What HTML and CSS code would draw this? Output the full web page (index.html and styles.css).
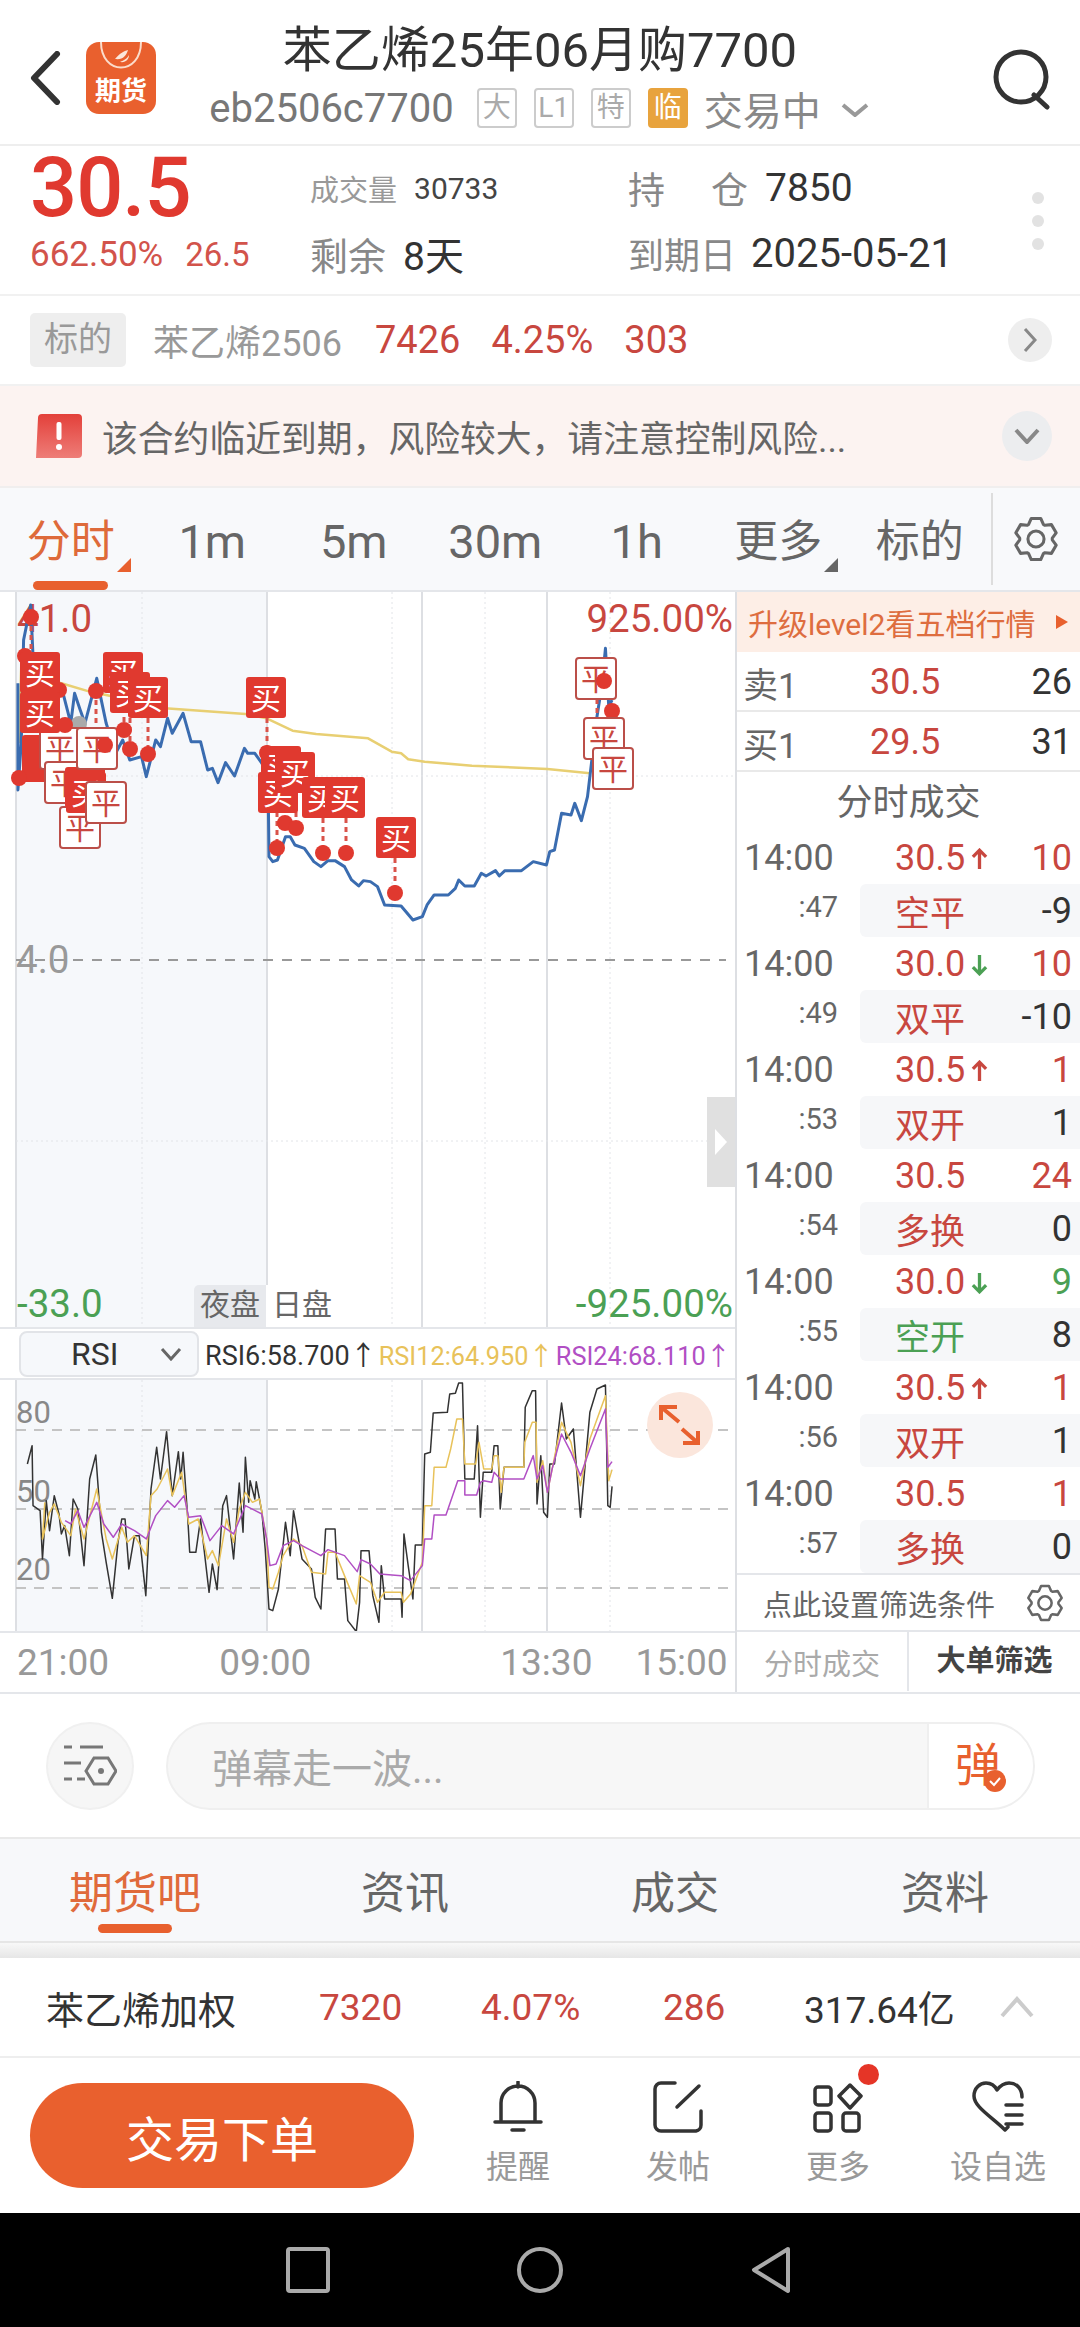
FILE: index.html
```html
<!DOCTYPE html>
<html lang="zh-CN">
<head>
    <meta charset="UTF-8">
    <meta name="viewport" content="width=device-width, initial-scale=1.0">
    <title>苯乙烯25年06月购7700</title>
    <link rel="stylesheet" href="styles.css">
</head>
<body>
<svg class="defs" width="0" height="0">
    <symbol id="gear" viewBox="0 0 24 24">
        <polygon points="9.53,1.28 14.47,1.28 15.86,4.43 16.63,4.87 20.04,4.5 22.52,8.79 20.49,11.55 20.49,12.45 22.52,15.21 20.04,19.5 16.63,19.13 15.86,19.57 14.47,22.72 9.53,22.72 8.14,19.57 7.37,19.13 3.96,19.5 1.48,15.21 3.51,12.45 3.51,11.55 1.48,8.79 3.96,4.5 7.37,4.87 8.14,4.43"/>
        <circle cx="12" cy="12" r="4.2"/>
    </symbol>
    <symbol id="up" viewBox="0 0 16 20">
        <path d="M8 19V2M2 8l6-6 6 6"/>
    </symbol>
    <symbol id="down" viewBox="0 0 16 20">
        <path d="M8 1v17M2 12l6 6 6-6"/>
    </symbol>
</svg>

<header class="top">
    <div class="top-left">
        <svg class="back" width="32" height="54" viewBox="0 0 32 54"><path d="M28 3L5 27l23 24"/></svg>
        <svg class="logo" width="70" height="72" viewBox="0 0 70 72">
            <rect width="70" height="72" y="0" rx="13" fill="#e9602e"/>
            <path d="M15 0c0 34 40 34 40 0" fill="none" stroke="#fbdccb" stroke-width="2"/>
            <path d="M29 17c5-6 9-8 13-9-2 6-5 10-13 9zM34 20c4-2 7-3 9-7 0 4-3 8-9 7z" fill="#fbe6da"/>
            <text x="35" y="58" class="logo-text">期货</text>
        </svg>
    </div>
    <div class="top-mid">
        <h1>苯乙烯25年06月购7700</h1>
        <div class="sub">
            <span class="code">eb2506c7700</span>
            <span class="flag">大</span>
            <span class="flag">L1</span>
            <span class="flag">特</span>
            <span class="flag flag-on">临</span>
            <span class="state">交易中</span>
            <svg class="state-arrow" width="28" height="14" viewBox="0 0 28 14"><path d="M2 2l12 10L26 2"/></svg>
        </div>
    </div>
    <div class="top-right">
        <svg class="search" width="62" height="62" viewBox="0 0 62 62"><circle cx="31" cy="29" r="25"/><path d="M44 47l13 12"/></svg>
    </div>
</header>

<section class="quote">
    <div class="q-left">
        <div class="q-price">30.5</div>
        <div class="q-change"><span>662.50%</span><span>26.5</span></div>
    </div>
    <div class="q-grid">
        <div class="q-cell"><span class="k-small">成交量</span><span class="v-small">30733</span></div>
        <div class="q-cell"><span class="k k-spread"><span>持</span><span>仓</span></span><span class="v">7850</span></div>
        <div class="q-cell"><span class="k">剩余</span><span class="v">8天</span></div>
        <div class="q-cell"><span class="k k-date">到期日</span><span class="v v-date">2025-05-21</span></div>
    </div>
    <div class="q-dots"><i></i><i></i><i></i></div>
</section>

<section class="under">
    <span class="under-tag">标的</span>
    <span class="under-name">苯乙烯2506</span>
    <span class="red">7426</span>
    <span class="red">4.25%</span>
    <span class="red">303</span>
    <span class="round-btn under-btn"><svg width="14" height="26" viewBox="0 0 14 26"><path d="M2 2l10 11L2 24"/></svg></span>
</section>

<section class="alert">
    <svg class="alert-icon" width="46" height="44" viewBox="0 0 46 44">
        <defs><linearGradient id="alertfill" x1="0" y1="0" x2="0" y2="1"><stop offset="0" stop-color="#e3403a"/><stop offset="1" stop-color="#ee7d78"/></linearGradient></defs>
        <path d="M6 0h36a4 4 0 0 1 4 4v36a4 4 0 0 1-4 4H0L2 4a4 4 0 0 1 4-4z" fill="url(#alertfill)"/>
        <rect x="20.5" y="8" width="5" height="18" rx="2" fill="#fff"/>
        <circle cx="23" cy="33" r="3" fill="#fff"/>
    </svg>
    <span class="alert-text">该合约临近到期，风险较大，请注意控制风险...</span>
    <span class="round-btn alert-btn"><svg width="26" height="16" viewBox="0 0 26 16"><path d="M2 2l11 12L24 2"/></svg></span>
</section>

<nav class="periods">
    <span class="period period-on">分时<i class="corner"></i><b class="period-bar"></b></span>
    <span class="period period-num">1m</span>
    <span class="period period-num">5m</span>
    <span class="period period-num">30m</span>
    <span class="period period-num">1h</span>
    <span class="period">更多<i class="corner"></i></span>
    <span class="period">标的</span>
    <span class="period-gear"><svg width="46" height="50"><use href="#gear"/></svg></span>
</nav>

<section class="board">
    <div class="charts">
        <div class="main-chart">
            <svg class="canvas" width="735" height="735" viewBox="0 592 735 735">
                <rect x="16" y="592" width="251" height="735" fill="#f6f8fb"/>
                <g class="grid-line">
                    <path d="M16 592V1327M267 592V1327M422 592V1327M547 592V1327"/>
                </g>
                <g class="grid-dot">
                    <path d="M142 592V1327M392 592V1327M485 592V1327M610 592V1327M16 776H735M16 1141H735"/>
                </g>
                <path class="zero-line" d="M16 960H726"/>

                <text x="17" y="632" class="lbl lbl-red">41.0</text>
                <text x="733" y="632" class="lbl lbl-red lbl-end">925.00%</text>
                <text x="16" y="973" class="lbl lbl-gray">4.0</text>
                <text x="17" y="1317" class="lbl lbl-green">-33.0</text>
                <text x="733" y="1317" class="lbl lbl-green lbl-end">-925.00%</text>

                <g transform="translate(0 590) scale(.4719 .3333)">
                    <polyline class="trace avg" points="40,460 45,230 130,280 190,305 225,315 350,355 520,372 565,385 620,422 670,432 780,445 830,485 850,490 865,508 900,515 1000,527 1160,537 1250,550"/>
                    <polyline class="trace price" points="38,280 38,600 45,460 50,150 65,45 70,200 72,300 90,330 110,300 130,290 150,400 158,310 170,360 180,400 205,265 225,400 245,490 260,450 275,510 300,500 310,560 330,450 340,470 355,385 365,430 388,370 405,455 425,455 440,540 450,535 462,578 478,518 497,558 518,475 525,490 540,490 555,520 568,560 570,800 578,815 588,810 605,740 615,740 625,765 645,775 665,815 680,830 695,812 710,812 730,830 745,870 760,888 770,872 785,875 800,890 815,945 850,948 875,990 895,980 905,945 920,915 950,915 965,895 972,870 985,888 1005,888 1020,850 1030,858 1050,842 1058,858 1070,842 1105,842 1130,815 1158,825 1165,785 1175,780 1190,670 1210,675 1218,640 1232,692 1245,620 1255,500 1265,380 1275,290 1283,175 1290,350 1297,330"/>
                </g>

                <path class="link" d="M31 617V652M96 691V728M124 690V730M130 700V749M148 718V754M267 718V753M277 812V848M296 812V828M323 818V853M346 818V853M395 858V893M597 699V718M612 711V730"/>

                <circle class="dot" cx="25" cy="656" r="8"/>
                <circle class="dot" cx="59" cy="690" r="8"/>
                <circle class="dot dot-gray" cx="79" cy="724" r="8"/>
                <circle class="dot" cx="267" cy="753" r="8"/>
                <rect class="block" x="22" y="735" width="40" height="47" rx="3"/>

                <g class="sell" transform="translate(40 728)"><rect width="40" height="41" rx="3"/><text x="20" y="32">平</text></g>
                <g class="buy" transform="translate(20 652)"><rect width="40" height="41" rx="3"/><text x="20" y="32">买</text></g>
                <g class="buy" transform="translate(20 692)"><rect width="40" height="41" rx="3"/><text x="20" y="32">买</text></g>
                <g class="buy" transform="translate(103 652)"><rect width="40" height="41" rx="3"/><text x="20" y="32">买</text></g>
                <g class="buy" transform="translate(110 672)"><rect width="40" height="41" rx="3"/><text x="20" y="32">买</text></g>
                <g class="buy" transform="translate(128 677)"><rect width="40" height="41" rx="3"/><text x="20" y="32">买</text></g>
                <g class="sell" transform="translate(45 762)"><rect width="40" height="41" rx="3"/><text x="20" y="32">平</text></g>
                <g class="sell" transform="translate(60 807)"><rect width="40" height="41" rx="3"/><text x="20" y="32">平</text></g>
                <g class="buy" transform="translate(65 767)"><rect width="40" height="41" rx="3"/><text x="20" y="32">买</text></g>
                <g class="buy" transform="translate(66 772)"><rect width="40" height="41" rx="3"/><text x="20" y="32">买</text></g>
                <g class="sell" transform="translate(77 728)"><rect width="40" height="41" rx="3"/><text x="20" y="32">平</text></g>
                <g class="sell" transform="translate(86 782)"><rect width="40" height="41" rx="3"/><text x="20" y="32">平</text></g>

                <g class="buy" transform="translate(246 677)"><rect width="40" height="41" rx="3"/><text x="20" y="32">买</text></g>
                <g class="buy" transform="translate(261 746)"><rect width="40" height="41" rx="3"/><text x="20" y="32">买</text></g>
                <g class="buy" transform="translate(258 772)"><rect width="40" height="41" rx="3"/><text x="20" y="32">买</text></g>
                <g class="buy" transform="translate(275 752)"><rect width="40" height="41" rx="3"/><text x="20" y="32">买</text></g>
                <g class="buy" transform="translate(302 777)"><rect width="40" height="41" rx="3"/><text x="20" y="32">买</text></g>
                <g class="buy" transform="translate(325 777)"><rect width="40" height="41" rx="3"/><text x="20" y="32">买</text></g>
                <g class="buy" transform="translate(376 817)"><rect width="40" height="41" rx="3"/><text x="20" y="32">买</text></g>

                <g class="sell" transform="translate(576 658)"><rect width="40" height="41" rx="3"/><text x="20" y="32">平</text></g>
                <circle class="dot" cx="612" cy="711" r="8"/>
                <g class="sell" transform="translate(584 718)"><rect width="40" height="41" rx="3"/><text x="20" y="32">平</text></g>
                <g class="sell" transform="translate(593 748)"><rect width="40" height="41" rx="3"/><text x="20" y="32">平</text></g>

                <circle class="dot" cx="31" cy="617" r="8"/>
                <circle class="dot" cx="19" cy="778" r="8"/>
                <circle class="dot" cx="65" cy="725" r="8"/>
                <circle class="dot" cx="96" cy="691" r="8"/>
                <circle class="dot" cx="105" cy="745" r="8"/>
                <circle class="dot" cx="124" cy="730" r="8"/>
                <circle class="dot" cx="130" cy="749" r="8"/>
                <circle class="dot" cx="148" cy="754" r="8"/>
                <circle class="dot" cx="277" cy="848" r="8"/>
                <circle class="dot" cx="285" cy="823" r="8"/>
                <circle class="dot" cx="296" cy="828" r="8"/>
                <circle class="dot" cx="323" cy="853" r="8"/>
                <circle class="dot" cx="346" cy="853" r="8"/>
                <circle class="dot" cx="395" cy="893" r="8"/>
                <circle class="dot" cx="604" cy="681" r="8"/>
            </svg>
            <div class="session"><span class="session-on">夜盘</span><span>日盘</span></div>
            <div class="handle"><i></i></div>
        </div>

        <div class="rsi-bar">
            <div class="rsi-select"><span>RSI</span><svg width="22" height="14" viewBox="0 0 22 14"><path d="M2 2l9 10 9-10"/></svg></div>
            <span class="rsi-val rsi6">RSI6:58.700↑</span>
            <span class="rsi-val rsi12">RSI12:64.950↑</span>
            <span class="rsi-val rsi24">RSI24:68.110↑</span>
        </div>

        <div class="rsi-chart">
            <svg class="canvas" width="735" height="251" viewBox="0 1381 735 251">
                <rect x="16" y="1381" width="251" height="251" fill="#f6f8fb"/>
                <g class="grid-line"><path d="M16 1381V1632M267 1381V1632M422 1381V1632M547 1381V1632"/></g>
                <g class="grid-dot"><path d="M142 1381V1632M392 1381V1632M485 1381V1632M610 1381V1632"/></g>
                <path class="rsi-dash" d="M16 1431H735M16 1510H735M16 1589H735"/>
                <text x="16" y="1424" class="rsi-lbl">80</text>
                <text x="16" y="1503" class="rsi-lbl">50</text>
                <text x="16" y="1581" class="rsi-lbl">20</text>
                <g transform="translate(0 1280) scale(.4719 .3333)">
                    <polyline class="trace r-black" points="58,555 68,500 70,680 85,695 90,840 98,665 105,755 115,650 125,705 130,765 137,740 147,830 155,660 165,690 178,860 190,600 203,528 215,760 225,850 238,958 250,790 258,720 265,720 273,870 285,770 295,770 300,830 309,950 320,630 332,505 340,600 353,458 365,650 378,518 383,600 388,520 398,720 402,820 415,820 425,720 443,940 450,855 460,932 472,680 480,650 495,840 507,612 515,760 520,535 527,670 530,605 540,660 543,608 555,700 562,810 570,990 578,995 590,930 605,730 615,830 622,695 640,840 660,870 668,955 680,990 690,750 710,750 715,900 730,900 737,1025 755,1058 762,970 765,815 782,815 790,950 803,1030 808,860 815,960 850,960 852,1015 856,765 865,860 875,960 880,798 895,798 900,525 912,520 918,402 948,400 953,345 965,343 972,312 980,312 985,600 1005,600 1012,440 1018,715 1024,580 1042,580 1047,500 1055,500 1060,690 1068,565 1110,565 1113,385 1128,335 1135,335 1138,675 1146,530 1152,700 1160,715 1165,555 1175,555 1190,372 1200,480 1215,450 1230,715 1250,400 1265,330 1283,318 1288,680 1293,685 1297,622"/>
                    <polyline class="trace r-yellow" points="95,670 90,780 105,700 115,675 130,730 150,770 160,690 178,780 205,630 225,780 238,840 258,745 270,790 285,770 310,830 320,650 333,630 355,570 365,650 385,580 400,735 420,720 440,840 450,815 463,860 480,720 495,790 507,690 520,640 535,670 550,660 565,780 570,925 578,930 590,880 600,830 622,780 640,800 660,880 690,885 695,820 710,820 730,890 755,975 762,890 785,910 800,970 815,940 850,940 855,970 870,945 895,850 900,680 915,680 920,565 945,565 955,510 968,420 980,420 985,555 1008,555 1015,490 1025,570 1042,570 1047,530 1055,530 1062,640 1068,565 1110,565 1112,490 1128,430 1136,430 1138,610 1150,545 1160,640 1170,570 1190,430 1210,490 1230,620 1250,480 1283,350 1290,605 1297,572"/>
                    <polyline class="trace r-purple" points="138,725 150,735 165,695 178,745 205,670 220,735 240,775 258,735 285,755 310,780 330,710 355,665 370,685 390,650 400,715 425,710 445,785 470,740 495,765 520,680 555,705 565,780 572,860 585,855 600,800 622,785 640,800 680,830 695,812 730,830 757,878 765,842 785,855 805,885 850,890 870,905 895,860 900,780 915,780 920,708 945,708 970,605 985,605 985,648 1010,648 1018,610 1025,605 1042,610 1047,580 1060,600 1110,600 1130,530 1138,600 1150,560 1160,640 1170,570 1190,465 1210,520 1230,590 1250,510 1283,390 1288,565 1297,548"/>
                </g>
                <ellipse cx="680" cy="1426" rx="33" ry="33" fill="#fbe6dc"/>
                <path class="expand" d="M661 1408l18 15M661 1421v-13h16M698 1444l-16-14M698 1432v12h-15"/>
            </svg>
        </div>

        <div class="axis"><span>21:00</span><span>09:00</span><span>13:30</span><span>15:00</span></div>
    </div>

    <aside class="side">
        <div class="upgrade"><span>升级level2看五档行情</span><i></i></div>
        <div class="level"><span class="level-k">卖1</span><span class="red">30.5</span><span class="level-q">26</span></div>
        <div class="level"><span class="level-k">买1</span><span class="red">29.5</span><span class="level-q">31</span></div>
        <div class="side-title">分时成交</div>
        <div class="deals">
            <div class="deal">
                <span class="t">14:00</span><span class="p">30.5<svg class="arr arr-up"><use href="#up"/></svg></span><span class="n red">10</span>
                <span class="s">:47</span><span class="kind"><b class="red">空平</b><span>-9</span></span>
            </div>
            <div class="deal">
                <span class="t">14:00</span><span class="p">30.0<svg class="arr arr-down"><use href="#down"/></svg></span><span class="n red">10</span>
                <span class="s">:49</span><span class="kind"><b class="red">双平</b><span>-10</span></span>
            </div>
            <div class="deal">
                <span class="t">14:00</span><span class="p">30.5<svg class="arr arr-up"><use href="#up"/></svg></span><span class="n red">1</span>
                <span class="s">:53</span><span class="kind"><b class="red">双开</b><span>1</span></span>
            </div>
            <div class="deal">
                <span class="t">14:00</span><span class="p">30.5</span><span class="n red">24</span>
                <span class="s">:54</span><span class="kind"><b class="red">多换</b><span>0</span></span>
            </div>
            <div class="deal">
                <span class="t">14:00</span><span class="p">30.0<svg class="arr arr-down"><use href="#down"/></svg></span><span class="n green">9</span>
                <span class="s">:55</span><span class="kind"><b class="green">空开</b><span>8</span></span>
            </div>
            <div class="deal">
                <span class="t">14:00</span><span class="p">30.5<svg class="arr arr-up"><use href="#up"/></svg></span><span class="n red">1</span>
                <span class="s">:56</span><span class="kind"><b class="red">双开</b><span>1</span></span>
            </div>
            <div class="deal">
                <span class="t">14:00</span><span class="p">30.5</span><span class="n red">1</span>
                <span class="s">:57</span><span class="kind"><b class="red">多换</b><span>0</span></span>
            </div>
        </div>
        <div class="filter"><span>点此设置筛选条件</span><svg width="38" height="40"><use href="#gear"/></svg></div>
        <div class="side-tabs"><span>分时成交</span><span class="side-tab-on">大单筛选</span></div>
    </aside>
</section>

<section class="danmu">
    <span class="danmu-set">
        <svg width="54" height="44" viewBox="0 0 54 44">
            <path d="M1 3h8M17 3h23M1 19h17M1 35h8M14 35h8"/>
            <polygon points="24,27 32,14 46,14 54,27 46,40 32,40" transform="translate(-1 0)"/>
            <circle class="danmu-core" cx="38" cy="27" r="3"/>
        </svg>
    </span>
    <div class="danmu-input">
        <span class="danmu-hint">弹幕走一波...</span>
        <span class="danmu-send">弹<i><svg width="18" height="18" viewBox="0 0 18 18"><path d="M4 9l4 4 6-7"/></svg></i></span>
    </div>
</section>

<nav class="tabs">
    <span class="tab tab-on">期货吧<b></b></span>
    <span class="tab">资讯</span>
    <span class="tab">成交</span>
    <span class="tab">资料</span>
</nav>
<div class="strip"></div>

<section class="index">
    <span class="index-name">苯乙烯加权</span>
    <span class="red">7320</span>
    <span class="red">4.07%</span>
    <span class="red">286</span>
    <span class="index-amt">317.64亿</span>
    <svg width="34" height="22" viewBox="0 0 34 22"><path d="M2 20L17 3l15 17"/></svg>
</section>

<footer class="actions">
    <button class="trade">交易下单</button>
    <div class="tools">
        <div class="tool">
            <svg width="50" height="52" viewBox="0 0 50 52">
                <path d="M25 1v5M8 39V22a17 17 0 0 1 34 0v17M2 41h46M19 49h12"/>
            </svg>
            <span>提醒</span>
        </div>
        <div class="tool">
            <svg width="50" height="52" viewBox="0 0 50 52">
                <path d="M22 2H8a6 6 0 0 0-6 6v36a6 6 0 0 0 6 6h35a6 6 0 0 0 5-6V30M46 5L24 26"/>
            </svg>
            <span>发帖</span>
        </div>
        <div class="tool">
            <svg width="50" height="52" viewBox="0 0 50 52">
                <rect x="2" y="6" width="16" height="18" rx="3"/>
                <rect x="2" y="32" width="16" height="18" rx="3"/>
                <rect x="30" y="32" width="16" height="18" rx="3"/>
                <path d="M37 4l11 11-11 12-11-12z"/>
            </svg>
            <span>更多</span>
            <i class="tool-dot"></i>
        </div>
        <div class="tool">
            <svg width="52" height="52" viewBox="0 0 52 52">
                <path d="M36 46l-3 3C20 36 2 26 2 15 2 7 8 2 14 2c5 0 9 3 11 7 3-4 7-7 12-7 8 0 13 6 13 14M34 24h16M34 34h16M34 43h16"/>
            </svg>
            <span>设自选</span>
        </div>
    </div>
</footer>

<div class="sysnav">
    <span><svg width="46" height="48" viewBox="0 0 46 48"><rect x="3" y="3" width="40" height="42" rx="2"/></svg></span>
    <span><svg width="48" height="48" viewBox="0 0 48 48"><circle cx="24" cy="24" r="21"/></svg></span>
    <span><svg width="44" height="48" viewBox="0 0 44 48"><path d="M38 3L4 24l34 21z"/></svg></span>
</div>
</body>
</html>
```

FILE: styles.css
```css
*{
    margin: 0;
    padding: 0;
    box-sizing: border-box;
}
body{
    width: 1080px;
    height: 2327px;
    overflow: hidden;
    background-color: #fff;
    color: #333;
    font-family: Roboto, "Noto Sans CJK SC", sans-serif;
}
i{
    font-style: normal;
}
svg path:not([fill]), svg polyline{
    fill: none;
}
.defs{
    position: absolute;
}
.red{
    color: #c8473f;
}
.green{
    color: #4ba054;
}

/* header */
.top{
    height: 146px;
    display: grid;
    grid-template-columns: 170px 1fr 170px;
    border-bottom: 2px solid #eeeeee;
}
.top-left{
    display: flex;
    align-items: center;
    padding: 11px 0 0 29px;
    gap: 25px;
}
.back path{
    stroke: #333;
    stroke-width: 6;
    stroke-linecap: round;
    stroke-linejoin: round;
}
.logo-text{
    fill: #fff;
    font-size: 26px;
    font-weight: 700;
    text-anchor: middle;
}
.top-mid{
    text-align: center;
    padding-top: 22px;
}
h1{
    font-size: 49px;
    font-weight: 400;
    line-height: 58px;
    color: #333;
    white-space: nowrap;
}
.sub{
    display: flex;
    justify-content: center;
    align-items: center;
    height: 50px;
    margin-top: 3px;
    margin-left: -2px;
    color: #777;
    white-space: nowrap;
}
.code{
    font-size: 40px;
    margin-right: 23px;
}
.flag{
    flex: none;
    width: 40px;
    height: 40px;
    margin-right: 17px;
    border: 2px solid #ccc;
    border-radius: 4px;
    font-size: 28px;
    line-height: 35px;
    color: #aaa;
}
.flag-on{
    background-color: #e8a33d;
    border-color: #e8a33d;
    color: #fff;
}
.state{
    font-size: 39px;
    margin-left: -1px;
    color: #888;
}
.state-arrow{
    flex: none;
    margin-left: 20px;
    margin-top: 4px;
}
.state-arrow path{
    stroke: #999;
    stroke-width: 4;
}
.top-right{
    display: flex;
    justify-content: flex-end;
    align-items: center;
    padding: 14px 28px 0 0;
}
.search circle, .search path{
    fill: none;
    stroke: #333;
    stroke-width: 5;
    stroke-linecap: round;
}

/* quote */
.quote{
    height: 150px;
    display: flex;
    border-bottom: 2px solid #f1f1f1;
}
.q-left{
    width: 310px;
    padding-left: 30px;
    color: #d2534b;
}
.q-price{
    font-size: 83px;
    font-weight: 500;
    line-height: 84px;
    color: #e0392f;
    letter-spacing: -1px;
}
.q-change{
    display: flex;
    align-items: baseline;
    gap: 22px;
    font-size: 35px;
    line-height: 40px;
    margin-top: 5px;
}
.q-change span + span{
    font-size: 33px;
}
.q-grid{
    width: 690px;
    display: grid;
    grid-template-columns: 318px 1fr;
    grid-template-rows: 44px 44px;
    row-gap: 21px;
    padding-top: 20px;
}
.q-cell{
    display: flex;
    align-items: center;
}
.k-small{
    font-size: 29px;
    color: #999;
    margin-right: 17px;
}
.v-small{
    font-size: 30px;
    color: #444;
}
.k{
    font-size: 38px;
    color: #888;
    margin-right: 17px;
}
.k-spread{
    width: 120px;
    font-size: 37px;
    display: flex;
    justify-content: space-between;
}
.k-date{
    font-size: 36px;
    margin-right: 15px;
}
.v{
    font-size: 39px;
    color: #333;
}
.v-date{
    font-size: 40px;
}
.q-dots{
    display: flex;
    flex-direction: column;
    gap: 11px;
    padding: 46px 0 0 32px;
}
.q-dots i{
    width: 12px;
    height: 12px;
    border-radius: 50%;
    background-color: #e2e2e2;
}

/* underlying */
.under{
    height: 90px;
    display: flex;
    align-items: center;
    gap: 31px;
    padding-left: 30px;
    font-size: 38px;
    border-bottom: 2px solid #f1f1f1;
}
.under-tag{
    width: 96px;
    height: 54px;
    margin-right: -4px;
    border-radius: 5px;
    background-color: #eeeeee;
    color: #999;
    font-size: 34px;
    line-height: 52px;
    text-align: center;
}
.under-name{
    margin-right: 2px;
    font-size: 36px;
    color: #999;
}
.round-btn{
    display: flex;
    align-items: center;
    justify-content: center;
    border-radius: 50%;
    background-color: #eeeeee;
    margin-left: auto;
}
.round-btn path{
    stroke: #888;
    stroke-width: 3;
}
.under-btn{
    width: 44px;
    height: 44px;
    margin-right: 28px;
}

/* alert */
.alert{
    height: 102px;
    display: flex;
    align-items: center;
    padding-left: 36px;
    background-color: #fcf3f1;
    border-bottom: 2px solid #f0eeee;
}
.alert-text{
    margin-left: 20px;
    font-size: 35.8px;
    color: #666;
}
.alert-btn{
    width: 50px;
    height: 50px;
    margin-right: 28px;
    background-color: #ecedef;
}
.alert-btn path{
    stroke-width: 4;
}

/* periods */
.periods{
    height: 104px;
    display: grid;
    grid-template-columns: repeat(7, 141.5px) 1fr;
    align-items: center;
    padding-top: 6px;
    background-color: #f8f9fb;
    border-bottom: 2px solid #e4e6ea;
}
.period{
    position: relative;
    text-align: center;
    font-size: 44px;
    line-height: 52px;
    color: #666;
}
.period-num{
    font-size: 47px;
}
.period-on{
    color: #de6a3a;
}
.corner{
    position: absolute;
    right: 11px;
    bottom: -4px;
    width: 0;
    height: 0;
    border-left: 14px solid transparent;
    border-bottom: 14px solid #666;
}
.period-on .corner{
    border-bottom-color: #e8602e;
}
.period-bar{
    position: absolute;
    left: 33px;
    top: 65px;
    width: 75px;
    height: 9px;
    border-radius: 5px;
    background-color: #e8602e;
}
.period-gear{
    height: 92px;
    margin-top: -6px;
    display: flex;
    align-items: center;
    justify-content: center;
    border-left: 2px solid #dddddd;
}
.period-gear svg, .filter svg{
    fill: none;
    stroke: #666;
    stroke-width: 1.6;
    stroke-linejoin: round;
}

/* chart block */
.board{
    height: 1102px;
    display: flex;
    border-bottom: 2px solid #e4e6ea;
}
.charts{
    width: 735px;
    display: flex;
    flex-direction: column;
}
.main-chart{
    position: relative;
    height: 735px;
}
.canvas{
    display: block;
}
.grid-line path{
    stroke: #dddfe3;
    stroke-width: 2;
}
.grid-dot path{
    stroke: #e2e4e8;
    stroke-width: 1;
    stroke-dasharray: 2 3;
}
.zero-line{
    stroke: #999;
    stroke-width: 2;
    stroke-dasharray: 10 9;
}
.lbl{
    font-size: 38.5px;
}
.lbl-end{
    text-anchor: end;
}
.lbl-red{
    fill: #c8473f;
}
.lbl-green{
    fill: #4ba054;
}
.lbl-gray{
    fill: #999;
}
.trace{
    vector-effect: non-scaling-stroke;
    stroke-linejoin: round;
}
.avg{
    stroke: #e8cf72;
    stroke-width: 2.5;
}
.price{
    stroke: #3a6cb0;
    stroke-width: 3;
}
.link{
    stroke: #d9534a;
    stroke-width: 3;
    stroke-dasharray: 5 4;
}
.dot{
    fill: #e0392f;
}
.dot-gray{
    fill: #aaa;
}
.block{
    fill: #e0392f;
}
.buy rect{
    fill: #e0392f;
}
.buy text{
    fill: #fff;
    font-size: 30px;
    text-anchor: middle;
}
.sell rect{
    fill: #fff;
    stroke: #bb4f49;
    stroke-width: 2;
}
.sell text{
    fill: #c8473f;
    font-size: 30px;
    text-anchor: middle;
}
.session{
    position: absolute;
    left: 194px;
    bottom: 0;
    display: flex;
    height: 42px;
    font-size: 30px;
    line-height: 40px;
    color: #666;
}
.session span{
    width: 72px;
    text-align: center;
    background-color: #fff;
    border-radius: 0 5px 0 0;
}
.session .session-on{
    background-color: #e7e9ed;
    border-radius: 5px 0 0 0;
}
.handle{
    position: absolute;
    left: 707px;
    top: 505px;
    width: 28px;
    height: 90px;
    display: flex;
    align-items: center;
    justify-content: center;
    background-color: #e0e0e0;
}
.handle i{
    width: 0;
    height: 0;
    border-left: 12px solid #fff;
    border-top: 13px solid transparent;
    border-bottom: 13px solid transparent;
}
.rsi-bar{
    height: 54px;
    display: flex;
    align-items: center;
    padding-left: 19px;
    border-top: 2px solid #e4e6ea;
    border-bottom: 2px solid #e4e6ea;
    font-size: 27px;
    white-space: nowrap;
}
.rsi-select{
    flex: none;
    width: 180px;
    height: 46px;
    display: flex;
    align-items: center;
    justify-content: space-between;
    padding: 0 15px 0 50px;
    margin-right: 6px;
    border: 2px solid #e2e4e8;
    border-radius: 8px;
    background-color: #f6f8fb;
    font-size: 32px;
}
.rsi-select path{
    stroke: #666;
    stroke-width: 3;
}
.rsi-val{
    margin-right: 2px;
}
.rsi6{
    color: #333;
}
.rsi12{
    font-size: 25.3px;
    color: #e8c25a;
}
.rsi24{
    font-size: 25.3px;
    color: #b14fc4;
    margin-right: 0;
}
.rsi-chart{
    height: 251px;
}
.rsi-dash{
    stroke: #c4c4c4;
    stroke-width: 2;
    stroke-dasharray: 10 8;
}
.rsi-lbl{
    font-size: 31px;
    fill: #888;
}
.r-black{
    stroke: #333;
    stroke-width: 1.5;
}
.r-yellow{
    stroke: #e8c25a;
    stroke-width: 1.5;
}
.r-purple{
    stroke: #b14fc4;
    stroke-width: 1.5;
}
.expand{
    stroke: #e8602e;
    stroke-width: 4;
}
.axis{
    height: 62px;
    display: flex;
    align-items: center;
    border-top: 2px solid #e4e6ea;
    padding-left: 17px;
    font-size: 37px;
    color: #999;
}
.axis span:nth-child(2){
    margin-left: 110px;
}
.axis span:nth-child(3){
    margin-left: 189px;
}
.axis span:nth-child(4){
    margin-left: 43px;
}

/* right panel */
.side{
    width: 345px;
    border-left: 2px solid #dddfe3;
}
.upgrade{
    height: 60px;
    display: flex;
    align-items: center;
    justify-content: space-between;
    padding: 0 12px 0 11px;
    background-color: #fdeee6;
    color: #de6d3f;
    font-size: 30px;
}
.upgrade i{
    width: 0;
    height: 0;
    border-left: 12px solid #e8602e;
    border-top: 7px solid transparent;
    border-bottom: 7px solid transparent;
}
.level{
    height: 60px;
    display: grid;
    grid-template-columns: 127px 1fr auto;
    align-items: center;
    padding: 2px 8px 0 6px;
    font-size: 36px;
    border-bottom: 2px solid #e9e9e9;
}
.level-k{
    color: #666;
    font-size: 35px;
}
.level-q{
    color: #333;
}
.side-title{
    height: 59px;
    line-height: 62px;
    text-align: center;
    font-size: 36px;
    color: #666;
}
.deals{
    height: 742px;
}
.deal{
    height: 106px;
    display: grid;
    grid-template-columns: 123px 1fr auto;
    grid-template-rows: 53px 53px;
    align-items: center;
    font-size: 36px;
}
.t{
    padding-left: 7px;
    color: #666;
    white-space: nowrap;
}
.p{
    padding-left: 35px;
    color: #c8473f;
    white-space: nowrap;
}
.n{
    padding-right: 8px;
    text-align: right;
}
.s{
    padding-right: 22px;
    padding-bottom: 8px;
    text-align: right;
    font-size: 29px;
    color: #666;
}
.kind{
    grid-column: 2 / 4;
    height: 53px;
    display: flex;
    align-items: center;
    justify-content: space-between;
    padding: 0 8px 0 35px;
    border-radius: 6px 0 0 6px;
    background-color: #f6f7f9;
    color: #333;
}
.kind b{
    font-size: 35px;
    font-weight: 400;
}
.arr{
    width: 19px;
    height: 22px;
    margin-left: 5px;
    fill: none;
    stroke-width: 3;
}
.arr-up{
    stroke: #c8473f;
}
.arr-down{
    stroke: #4ba054;
}
.filter{
    height: 59px;
    display: flex;
    align-items: center;
    justify-content: space-between;
    padding: 0 16px 0 26px;
    border-top: 2px solid #e4e6ea;
    border-bottom: 2px solid #e4e6ea;
    font-size: 29px;
    color: #666;
}
.side-tabs{
    height: 59px;
    display: grid;
    grid-template-columns: 170px 1fr;
    align-items: center;
    text-align: center;
    font-size: 29px;
    color: #aaa;
}
.side-tab-on{
    height: 100%;
    line-height: 59px;
    border-left: 2px solid #e4e6ea;
    color: #444;
    font-weight: 700;
}

/* danmaku input */
.danmu{
    height: 145px;
    display: flex;
    align-items: center;
    gap: 32px;
    padding-left: 46px;
    border-bottom: 2px solid #e9e9e9;
}
.danmu-set{
    width: 88px;
    height: 88px;
    display: flex;
    align-items: center;
    justify-content: center;
    border: 2px solid #f0f0f0;
    border-radius: 50%;
    background-color: #f6f6f6;
}
.danmu-set svg{
    stroke: #777;
    stroke-width: 3;
    fill: none;
}
.danmu-core{
    fill: #777;
    stroke: none;
}
.danmu-input{
    width: 869px;
    height: 88px;
    display: flex;
    align-items: center;
    justify-content: space-between;
    border: 2px solid #efefef;
    border-radius: 44px;
    background-color: #f7f7f7;
    overflow: hidden;
}
.danmu-hint{
    padding-left: 44px;
    font-size: 40px;
    color: #aaa;
}
.danmu-send{
    position: relative;
    width: 106px;
    height: 100%;
    padding-left: 26px;
    background-color: #fff;
    border-left: 2px solid #efefef;
    font-size: 46px;
    line-height: 82px;
    color: #e8602e;
}
.danmu-send i{
    position: absolute;
    left: 55px;
    top: 46px;
    width: 22px;
    height: 22px;
    display: flex;
    align-items: center;
    justify-content: center;
    border-radius: 50%;
    background-color: #e8602e;
}
.danmu-send path{
    stroke: #fff;
    stroke-width: 2;
}

/* content tabs */
.tabs{
    height: 104px;
    display: grid;
    grid-template-columns: repeat(4, 270px);
    align-items: center;
    background-color: #f7f8fa;
    border-bottom: 2px solid #e6e6e6;
}
.tab{
    position: relative;
    text-align: center;
    font-size: 44px;
    color: #666;
}
.tab-on{
    color: #e06a3b;
}
.tab-on b{
    position: absolute;
    left: 98px;
    top: 66px;
    width: 74px;
    height: 9px;
    border-radius: 5px;
    background-color: #e8602e;
}
.strip{
    height: 15px;
    background: linear-gradient(#f8f8f8, #e6e6e6);
}
.index{
    height: 100px;
    display: grid;
    grid-template-columns: 273px 162px 182px 141px 196px auto;
    align-items: center;
    padding-left: 46px;
    font-size: 37px;
    border-bottom: 2px solid #eeeeee;
}
.index-name{
    font-size: 38px;
    color: #333;
}
.index-amt{
    color: #333;
}
.index path{
    stroke: #ccc;
    stroke-width: 4;
}

/* bottom actions */
.actions{
    height: 155px;
    display: flex;
    align-items: center;
    padding-left: 30px;
}
.trade{
    width: 384px;
    height: 105px;
    border: none;
    border-radius: 53px;
    background-color: #e9602e;
    color: #fff;
    font-family: inherit;
    font-size: 48px;
}
.tools{
    margin-left: 24px;
    display: grid;
    grid-template-columns: repeat(4, 160px);
}
.tool{
    position: relative;
    display: flex;
    flex-direction: column;
    align-items: center;
    font-size: 32px;
    color: #999;
}
.tool svg{
    margin-top: 2px;
    fill: none;
    stroke: #333;
    stroke-width: 3.5;
    stroke-linecap: round;
    stroke-linejoin: round;
}
.tool span{
    line-height: 50px;
    margin-top: 9px;
}
.tool-dot{
    position: absolute;
    left: 100px;
    top: -15px;
    width: 21px;
    height: 21px;
    border-radius: 50%;
    background-color: #e53527;
}

/* system nav */
.sysnav{
    height: 114px;
    display: flex;
    justify-content: center;
    align-items: center;
    background-color: #000;
}
.sysnav span{
    width: 232px;
    display: flex;
    justify-content: center;
}
.sysnav svg *{
    fill: none;
    stroke: #aaa;
    stroke-width: 4;
    stroke-linejoin: round;
}
```
